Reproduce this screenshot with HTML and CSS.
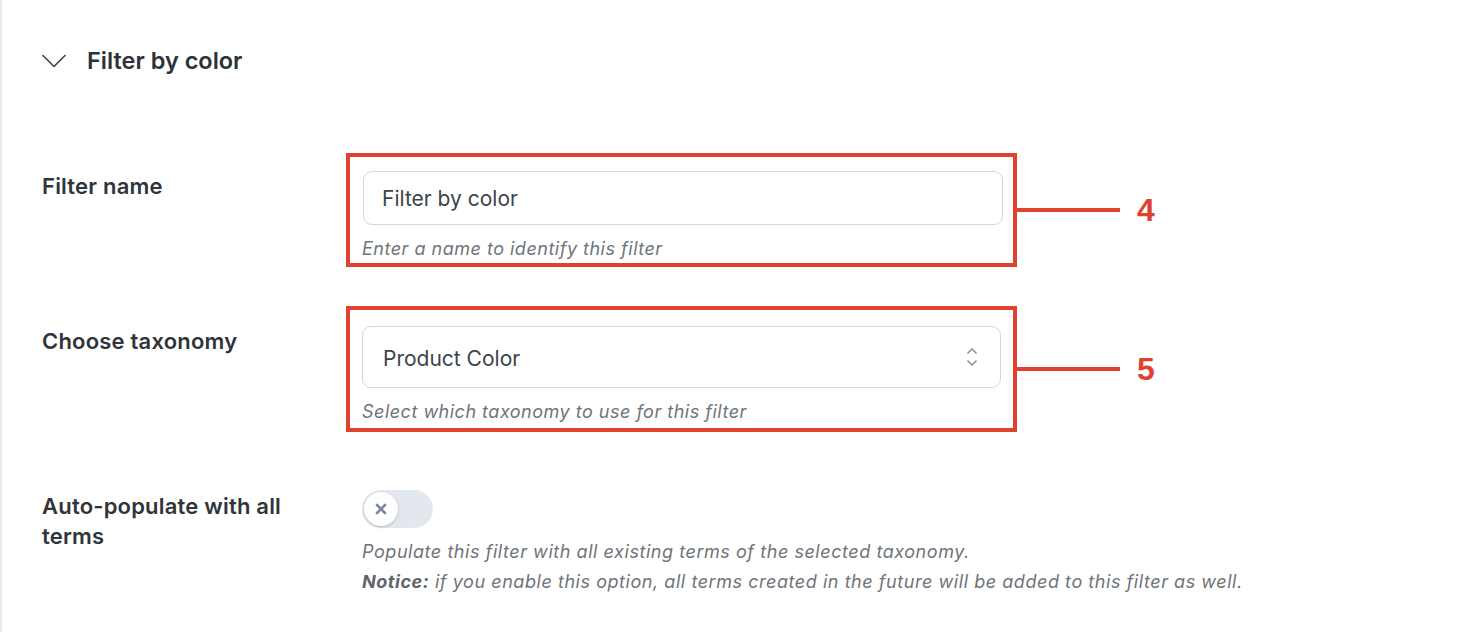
FILE: index.html
```html
<!DOCTYPE html>
<html lang="en">
<head>
<meta charset="utf-8">
<title>Filter by color</title>
<link rel="stylesheet" href="styles.css">
</head>
<body>
<div class="panel">
  <div class="header">
    <svg class="chevron" width="24" height="14" viewBox="0 0 24 14"><path d="M1 1.5 L12 12.5 L23 1.5" fill="none" stroke="#3c434a" stroke-width="1.6" stroke-linecap="round" stroke-linejoin="round"/></svg>
    <h2 class="title">Filter by color</h2>
  </div>

  <div class="row row-name">
    <div class="label">Filter name</div>
    <div class="callout">
      <div class="box box-name">
        <div class="input">Filter by color</div>
        <div class="hint">Enter a name to identify this filter</div>
      </div>
      <div class="line"></div>
      <div class="num">4</div>
    </div>
  </div>

  <div class="row row-tax">
    <div class="label">Choose taxonomy</div>
    <div class="callout">
      <div class="box box-tax">
        <div class="select">
          <span>Product Color</span>
          <svg class="arrows" width="12" height="22" viewBox="0 0 12 22"><path d="M2 7 L6 3 L10 7 M2 15 L6 19 L10 15" fill="none" stroke="#8a94a3" stroke-width="1.7" stroke-linecap="round" stroke-linejoin="round"/></svg>
        </div>
        <div class="hint">Select which taxonomy to use for this filter</div>
      </div>
      <div class="line"></div>
      <div class="num">5</div>
    </div>
  </div>

  <div class="row row-auto">
    <div class="label label-wrap">Auto-populate with all terms</div>
    <div class="field">
      <div class="toggle">
        <div class="knob">
          <svg width="14" height="14" viewBox="0 0 14 14"><path d="M3 3 L11 11 M11 3 L3 11" stroke="#7d8898" stroke-width="2.6" stroke-linecap="round"/></svg>
        </div>
      </div>
      <p class="desc">Populate this filter with all existing terms of the selected taxonomy.<br><strong>Notice:</strong> if you enable this option, all terms created in the future will be added to this filter as well.</p>
    </div>
  </div>
</div>
</body>
</html>
```

FILE: styles.css
```css
* { box-sizing: border-box; }
html, body { margin: 0; padding: 0; background: #ffffff; }
body {
  font-family: Inter, "Noto Sans", "Liberation Sans", sans-serif;
  color: #2c3338;
  height: 632px;
  overflow: hidden;
}
.panel {
  border-left: 2px solid #e6e9ec;
  padding-left: 40px;
  padding-top: 46px;
  height: 632px;
}
.header {
  display: flex;
  align-items: center;
  height: 30px;
  margin-bottom: 77px;
}
.chevron { display: block; margin-right: 21px; margin-left: 0; }
.title {
  margin: 0;
  font-size: 23.5px;
  line-height: 30px;
  font-weight: 600;
  color: #2c3338;
}
.row { display: flex; align-items: flex-start; }
.label {
  width: 304px;
  flex: none;
  font-size: 22px;
  line-height: 30px;
  font-weight: 600;
  letter-spacing: 0.2px;
  color: #2f353a;
}
.row-name .label { padding-top: 18px; }
.row-tax { margin-top: 39px; }
.row-tax .label { padding-top: 20px; }
.row-auto { margin-top: 58px; }
.row-auto .label { padding-top: 1px; }
.label-wrap { padding-right: 30px; }
.callout { display: flex; align-items: center; }
.box {
  width: 671px;
  border: 4px solid #df4330;
  padding: 14px 10px 2px 12px;
}
.box-tax { padding: 16px 12px 4px 12px; }
.input {
  height: 54px;
  border: 1px solid #d4d8dd;
  border-radius: 9px;
  padding: 0 18px;
  margin-left: 1px;
  display: flex;
  align-items: center;
  font-size: 21px;
  color: #3c434a;
}
.select {
  height: 62px;
  border: 1px solid #d4d8dd;
  border-radius: 9px;
  padding: 0 22px 0 20px;
  display: flex;
  align-items: center;
  justify-content: space-between;
  font-size: 21px;
  color: #3c434a;
}
.select span { position: relative; top: 1px; }
.arrows { display: block; }
.hint {
  margin-top: 12px;
  font-size: 18px;
  line-height: 24px;
  letter-spacing: 0.5px;
  font-style: italic;
  color: #6f747a;
}
.line { width: 103px; height: 4px; background: #df4330; }
.num {
  margin-left: 17px;
  font-family: "Liberation Sans", Arial, sans-serif;
  font-weight: 700;
  font-size: 32px;
  line-height: 32px;
  color: #df4330;
}
.field { padding-left: 16px; }
.toggle {
  width: 71px;
  height: 38px;
  border-radius: 19px;
  background: #e3e8ef;
  padding: 2px;
}
.knob {
  width: 34px;
  height: 34px;
  border-radius: 50%;
  background: #ffffff;
  box-shadow: 0 1px 3px rgba(0,0,0,0.2);
  display: flex;
  align-items: center;
  justify-content: center;
}
.knob svg { display: block; }
.desc {
  margin: 9px 0 0 0;
  font-size: 18px;
  line-height: 30px;
  letter-spacing: 0.55px;
  font-style: italic;
  color: #6f747a;
}
.desc strong { font-weight: 700; color: #5f646a; }
```
